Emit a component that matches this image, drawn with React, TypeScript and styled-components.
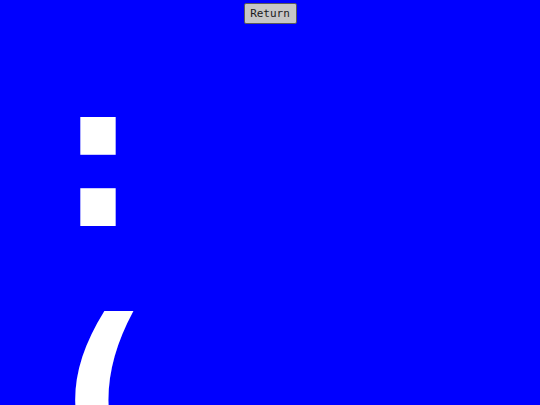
import React from "react";
import styled, { createGlobalStyle } from "styled-components";

const Global = createGlobalStyle`
  html, body { margin: 0; padding: 0; background: #0000ff; overflow: hidden; }
  #root { width: 540px; height: 405px; }
`;

const Screen = styled.div`
  width: 540px;
  height: 405px;
  background: #0000ff;
  display: flex;
  flex-direction: column;
  align-items: center;
  overflow: hidden;
`;

const ReturnButton = styled.button`
  margin-top: 3px;
  width: 53px;
  height: 21px;
  padding: 0;
  background: #c6c6c6;
  border: 1px solid #5a5a5a;
  border-radius: 2px;
  font-family: "DejaVu Sans Mono", monospace;
  font-size: 11px;
  color: #1a1a1a;
  flex-shrink: 0;
`;

const Face = styled.div`
  align-self: stretch;
  padding-left: 58px;
  margin-top: 14px;
  font-family: "DejaVu Sans", sans-serif;
  font-weight: bold;
  font-size: 200px;
  line-height: 1.185;
  color: #ffffff;
  white-space: pre;
`;

export default function App() {
  return (
    <Screen>
      <Global />
      <ReturnButton>Return</ReturnButton>
      <Face>{":\n("}</Face>
    </Screen>
  );
}
